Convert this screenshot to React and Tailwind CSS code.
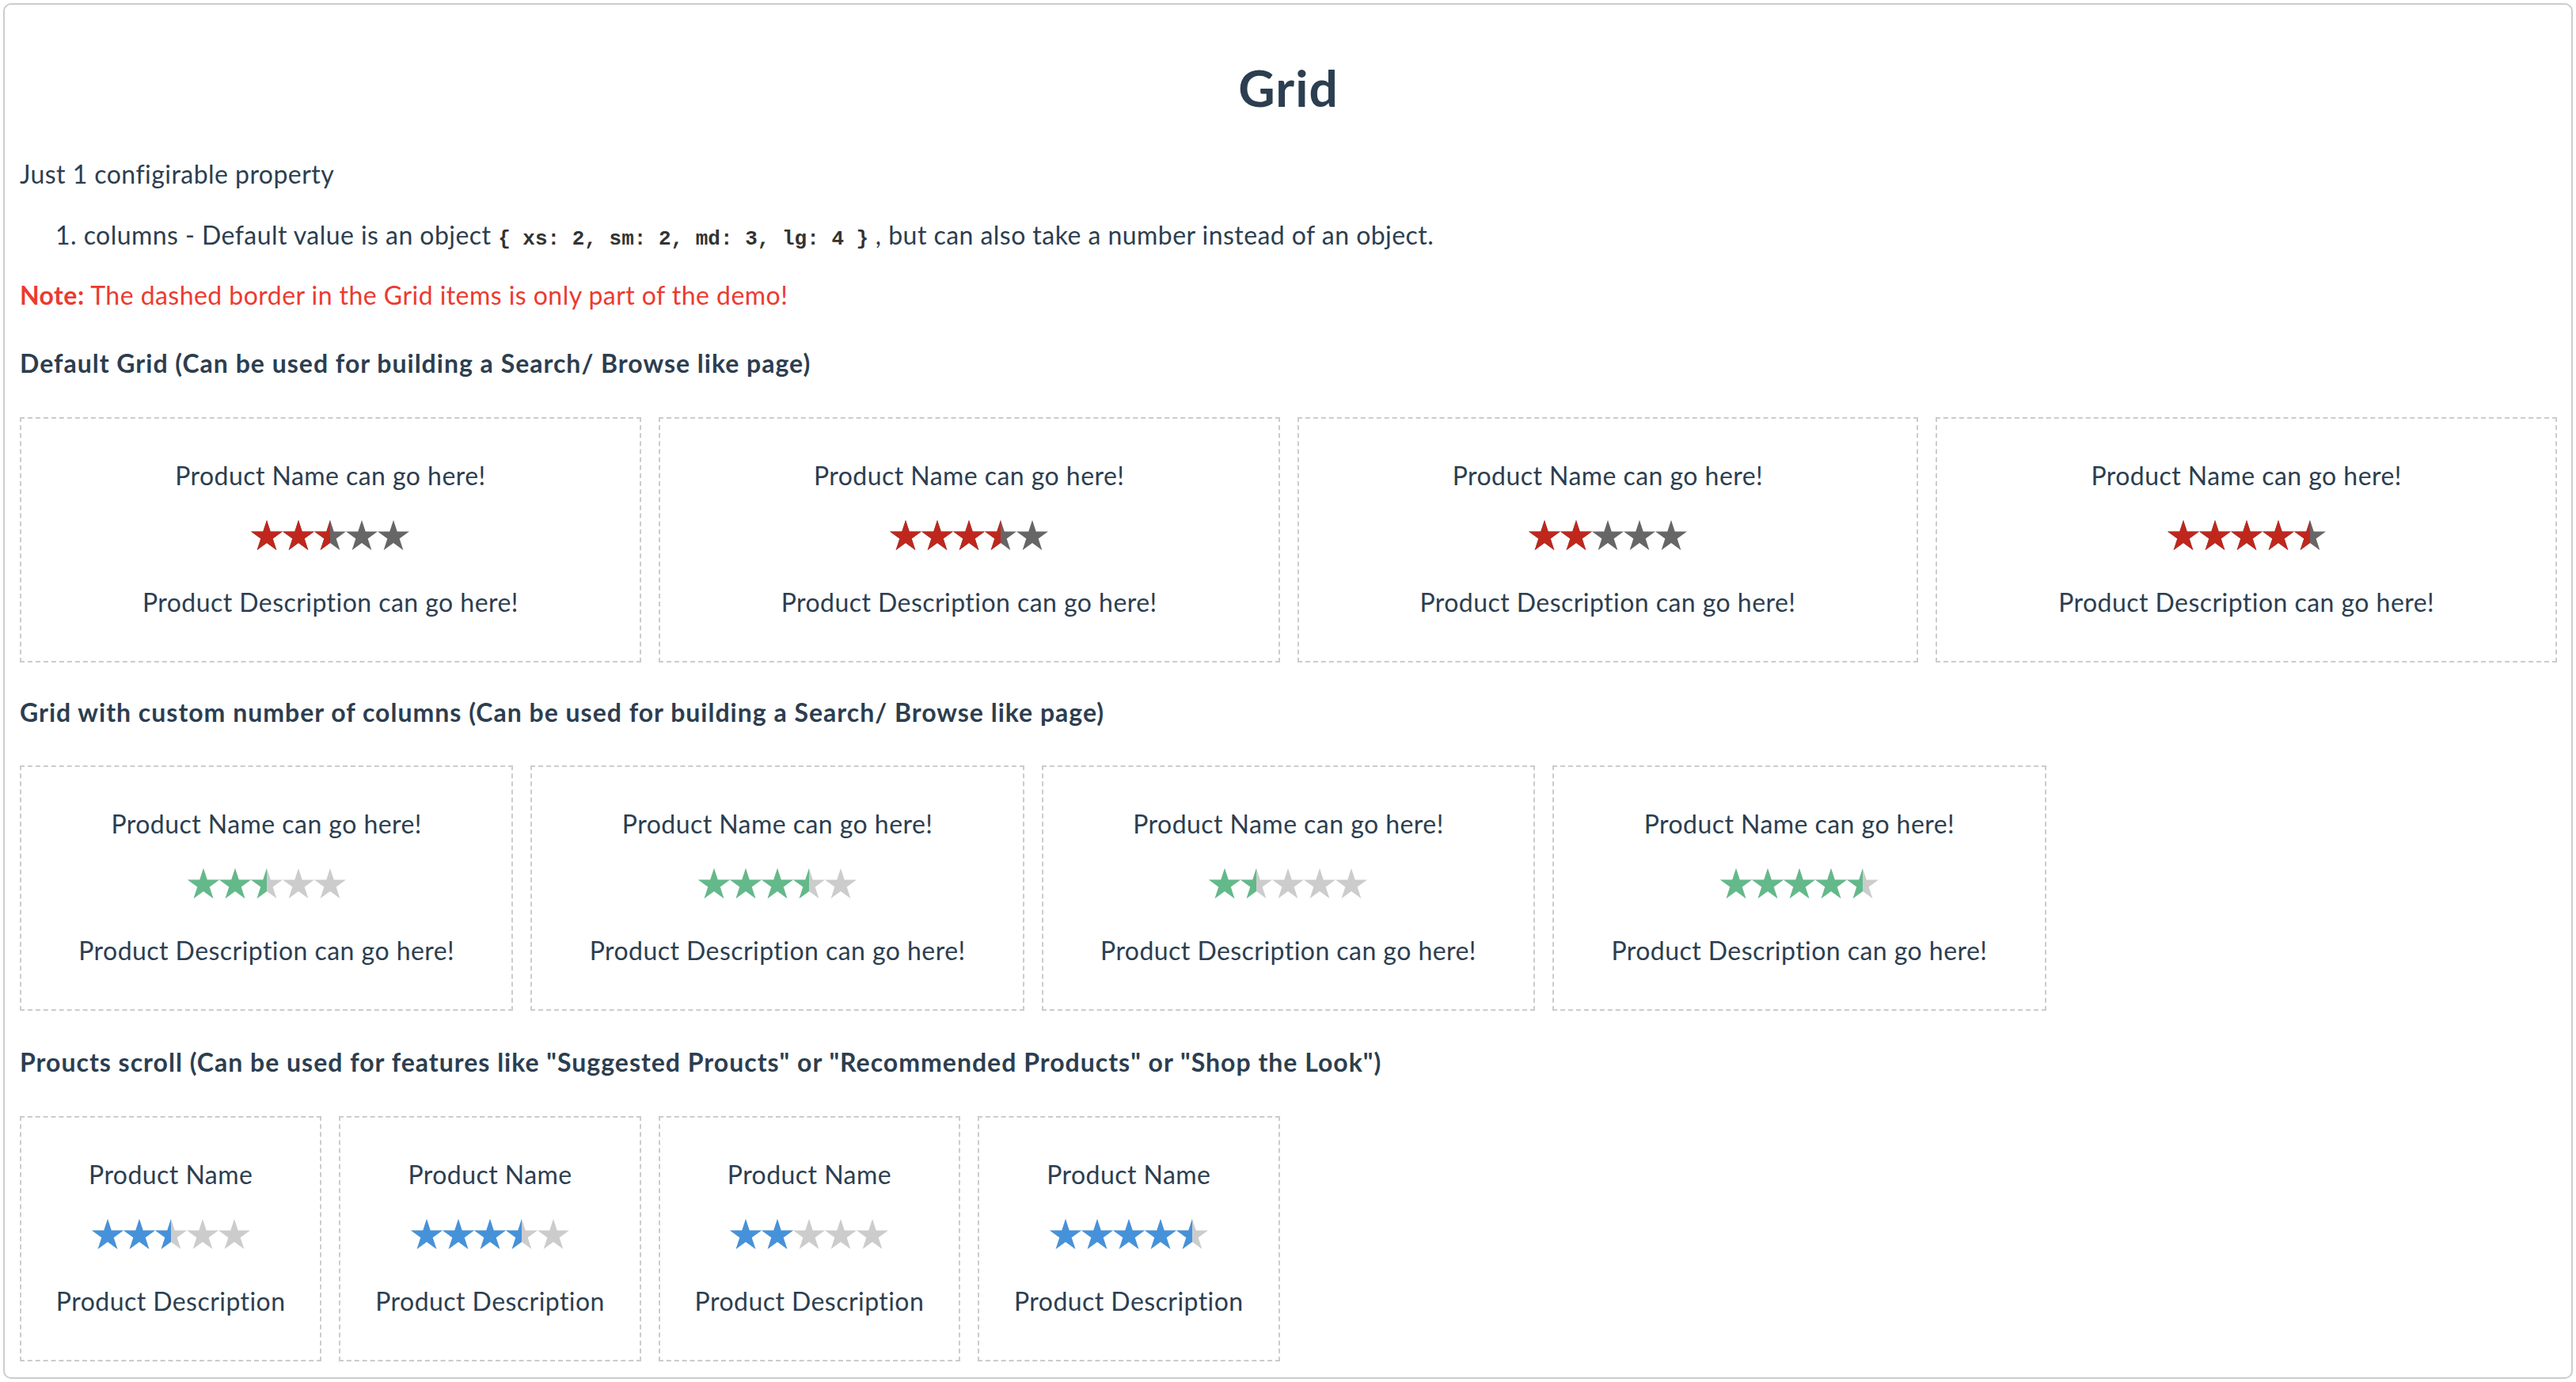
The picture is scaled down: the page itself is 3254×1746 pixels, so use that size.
import React, { useId } from "react";

const STAR =
  "20,0 24.72,14.53 40,14.53 27.64,23.51 32.36,38.04 20,29.06 7.64,38.04 12.36,23.51 0,14.53 15.28,14.53";

function Stars({ rating, color, empty }) {
  const id = useId().replace(/:/g, "");
  const stars = [0, 1, 2, 3, 4].map((i) => (
    <polygon key={i} points={STAR} transform={`translate(${i * 40} 0)`} />
  ));
  return (
    <svg width="200" height="38" viewBox="0 0 200 38" className="block">
      <defs>
        <clipPath id={`c${id}`}>
          <rect x="0" y="0" width={rating * 40} height="38" />
        </clipPath>
      </defs>
      <g fill={empty}>{stars}</g>
      <g fill={color} clipPath={`url(#c${id})`}>
        {stars}
      </g>
    </svg>
  );
}

function Card({ name, desc, rating, color, empty }) {
  return (
    <div className="flex flex-col items-center border-2 border-dashed border-[#cccccc] pt-[48px] pb-[50px] text-[32px] leading-[48px] tracking-[0.45px] text-[#2c3e50]">
      <div className="whitespace-nowrap">{name}</div>
      <div className="mt-[32px]">
        <Stars rating={rating} color={color} empty={empty} />
      </div>
      <div className="mt-[42px] whitespace-nowrap">{desc}</div>
    </div>
  );
}

const RED = "#bf271d";
const DARK = "#666666";
const GREEN = "#63b98a";
const LIGHT = "#cccccc";
const BLUE = "#4592db";

export default function App() {
  const long = { name: "Product Name can go here!", desc: "Product Description can go here!" };
  const short = { name: "Product Name", desc: "Product Description" };
  return (
    <div
      className="p-[4px] bg-white"
      style={{ fontFamily: "Lato, 'Noto Sans', sans-serif" }}
    >
      <div className="border-2 border-[#cccccc] rounded-[10px] pl-[19px] pr-[18px] pb-[20px] text-[#2c3e50]">
        <h1 className="mt-[66px] text-center text-[64px] leading-[77px] font-bold tracking-[1px] text-[#2c3e50]">
          Grid
        </h1>
        <p className="mt-[47px] text-[32px] leading-[48px] tracking-[0.45px]">
          Just 1 configirable property
        </p>
        <p className="mt-[29px] pl-[45px] h-[48px] text-[32px] leading-[48px] tracking-[0.45px] whitespace-nowrap">
          1. columns - Default value is an object{" "}
          <code
            className="text-[26px] leading-none font-bold tracking-normal text-[#333333]"
            style={{ fontFamily: "'Liberation Mono', monospace" }}
          >
            {"{ xs: 2, sm: 2, md: 3, lg: 4 }"}
          </code>{" "}
          , but can also take a number instead of an object.
        </p>
        <p className="mt-[28px] text-[32px] leading-[48px] tracking-[0.45px] text-[#ec3a2f]">
          <span className="font-bold">Note:</span> The dashed border in the Grid items is only part
          of the demo!
        </p>

        <h2 className="mt-[38px] text-[32px] leading-[48px] font-bold tracking-[1px]">
          Default Grid (Can be used for building a Search/ Browse like page)
        </h2>
        <div className="mt-[44px] grid grid-cols-4 gap-[22px]">
          <Card {...long} rating={2.5} color={RED} empty={DARK} />
          <Card {...long} rating={3.5} color={RED} empty={DARK} />
          <Card {...long} rating={2} color={RED} empty={DARK} />
          <Card {...long} rating={4.5} color={RED} empty={DARK} />
        </div>

        <h2 className="mt-[39px] text-[32px] leading-[48px] font-bold tracking-[1px]">
          Grid with custom number of columns (Can be used for building a Search/ Browse like page)
        </h2>
        <div className="mt-[43px] grid grid-cols-5 gap-[22px]">
          <Card {...long} rating={2.5} color={GREEN} empty={LIGHT} />
          <Card {...long} rating={3.5} color={GREEN} empty={LIGHT} />
          <Card {...long} rating={1.5} color={GREEN} empty={LIGHT} />
          <Card {...long} rating={4.5} color={GREEN} empty={LIGHT} />
        </div>

        <h2 className="mt-[41px] text-[32px] leading-[48px] font-bold tracking-[1px]">
          Proucts scroll (Can be used for features like "Suggested Proucts" or "Recommended
          Products" or "Shop the Look")
        </h2>
        <div className="mt-[44px] grid grid-cols-8 gap-[22px]">
          <Card {...short} rating={2.5} color={BLUE} empty={LIGHT} />
          <Card {...short} rating={3.5} color={BLUE} empty={LIGHT} />
          <Card {...short} rating={2} color={BLUE} empty={LIGHT} />
          <Card {...short} rating={4.5} color={BLUE} empty={LIGHT} />
        </div>
      </div>
    </div>
  );
}
